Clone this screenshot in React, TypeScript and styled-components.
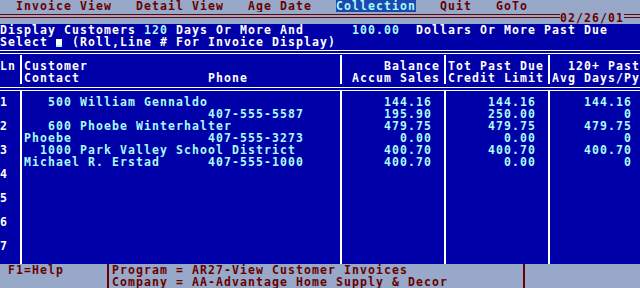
import React from "react";
import styled, { createGlobalStyle } from "styled-components";

const BLUE = "#0000a8";
const GRAY = "#98a8c8";
const RED = "#680000";
const CYAN = "#a8fcfc";
const WHITE = "#ffffff";
const CELL = 8;

const GlobalStyle = createGlobalStyle`
  html, body {
    margin: 0;
    padding: 0;
    background: ${BLUE};
  }
  body {
    font-family: "DejaVu Sans Mono", "Liberation Mono", monospace;
    font-weight: bold;
    font-size: 11.5px;
    letter-spacing: 1.077px;
    line-height: 12px;
  }
  #root {
    width: 640px;
    height: 288px;
  }
`;

const Screen = styled.div`
  width: 640px;
  height: 288px;
  display: flex;
  flex-direction: column;
  overflow: hidden;
  white-space: pre;
`;

const MenuBar = styled.div`
  height: 12px;
  display: flex;
  gap: ${3 * CELL}px;
  padding-left: ${2 * CELL}px;
  background: ${GRAY};
  color: ${RED};
`;

const MenuItem = styled.span<{ $active?: boolean }>`
  height: 12px;
  background: ${(p) => (p.$active ? "#1c48b0" : "transparent")};
  color: ${(p) => (p.$active ? CYAN : RED)};
`;

const DateRow = styled.div`
  height: 12px;
  display: flex;
  align-items: flex-start;
  background: ${GRAY};
  color: ${RED};
`;

const RedRule = styled.div<{ $w?: number }>`
  ${(p) => (p.$w ? `width: ${p.$w}px;` : "flex: 1;")}
  height: 4px;
  margin-top: 2px;
  box-sizing: border-box;
  border-top: 1px solid ${RED};
  border-bottom: 1px solid ${RED};
`;

const Prompt = styled.div`
  background: ${BLUE};
  color: ${WHITE};
`;

const Line = styled.div`
  height: 12px;
  display: flex;
`;

const Hi = styled.span`
  color: ${CYAN};
`;

const CursorCell = styled.span`
  width: ${CELL}px;
  display: flex;
  align-items: flex-end;
  padding-bottom: 1px;
  box-sizing: border-box;
`;

const Cursor = styled.span`
  width: 6px;
  height: 6px;
  background: ${WHITE};
  border-bottom: 2px solid ${CYAN};
`;

const DoubleRule = styled.div<{ $top: number; $bottom: number }>`
  height: 4px;
  margin-top: ${(p) => p.$top}px;
  margin-bottom: ${(p) => p.$bottom}px;
  box-sizing: border-box;
  border-top: 1px solid ${WHITE};
  border-bottom: 1px solid ${WHITE};
`;

const Section = styled.div<{ $h: number }>`
  height: ${(p) => p.$h}px;
  display: flex;
  background: ${BLUE};
`;

const Column = styled.div<{ $w?: number; $first?: boolean; $right?: boolean; $pl?: number; $pr?: number; $color?: string }>`
  ${(p) => (p.$w ? `width: ${p.$w}px;` : "flex: 1;")}
  box-sizing: border-box;
  padding-top: 5px;
  padding-left: ${(p) => p.$pl ?? 0}px;
  padding-right: ${(p) => p.$pr ?? 0}px;
  border-left: ${(p) => (p.$first ? "none" : `2px solid ${WHITE}`)};
  text-align: ${(p) => (p.$right ? "right" : "left")};
  color: ${(p) => p.$color ?? WHITE};
`;

const CellLine = styled.div`
  height: 12px;
`;

const NumField = styled.span`
  display: inline-block;
  width: ${4 * CELL}px;
  margin-left: ${2 * CELL}px;
  margin-right: ${CELL}px;
  text-align: right;
`;

const ContactField = styled.span`
  display: inline-block;
  width: ${23 * CELL}px;
`;

const StatusBar = styled.div`
  height: 24px;
  display: flex;
  background: ${GRAY};
  color: ${RED};
`;

const StatusCell = styled.div<{ $w?: number; $pl: number }>`
  ${(p) => (p.$w ? `width: ${p.$w}px;` : "flex: 1;")}
  padding-left: ${(p) => p.$pl}px;
  box-sizing: border-box;
`;

const Divider = styled.div`
  width: 2px;
  background: ${RED};
`;

type Row = {
  num: string;
  name: string;
  contact: string;
  phone: string;
  balance: string;
  accum: string;
  pastDue: string;
  credit: string;
  past120: string;
  avg: string;
};

const rows: Row[] = [
  { num: "500", name: "William Gennaldo", contact: "", phone: "407-555-5587", balance: "144.16", accum: "195.90", pastDue: "144.16", credit: "250.00", past120: "144.16", avg: "0" },
  { num: "600", name: "Phoebe Winterhalter", contact: "Phoebe", phone: "407-555-3273", balance: "479.75", accum: "0.00", pastDue: "479.75", credit: "0.00", past120: "479.75", avg: "0" },
  { num: "1000", name: "Park Valley School District", contact: "Michael R. Erstad", phone: "407-555-1000", balance: "400.70", accum: "400.70", pastDue: "400.70", credit: "0.00", past120: "400.70", avg: "0" },
];

const SLOTS = 7;
const menu = ["Invoice View", "Detail View", "Age Date", "Collection", "Quit", "GoTo"];

const pair = (a: string, b: string, key: number) => (
  <React.Fragment key={key}>
    <CellLine>{a || " "}</CellLine>
    <CellLine>{b || " "}</CellLine>
  </React.Fragment>
);

const App = (): React.ReactElement => {
  const slots = Array.from({ length: SLOTS }, (_, i) => rows[i]);
  return (
    <>
      <GlobalStyle />
      <Screen>
        <MenuBar>
          {menu.map((m) => (
            <MenuItem key={m} $active={m === "Collection"}>{m}</MenuItem>
          ))}
        </MenuBar>
        <DateRow>
          <RedRule />
          <span>02/26/01</span>
          <RedRule $w={16} />
        </DateRow>

        <Prompt>
          <Line>
            Display Customers <Hi>120</Hi> Days Or More And      <Hi>100.00</Hi>  Dollars Or More Past Due
          </Line>
          <Line>
            {"Select "}
            <CursorCell><Cursor /></CursorCell>
            {" (Roll,Line # For Invoice Display)"}
          </Line>
        </Prompt>

        <DoubleRule $top={2} $bottom={1} />

        <Section $h={29}>
          <Column $w={20} $first>
            <CellLine>Ln</CellLine>
          </Column>
          <Column $w={320} $pl={2}>
            <CellLine>Customer</CellLine>
            <CellLine><ContactField>Contact</ContactField>Phone</CellLine>
          </Column>
          <Column $w={104} $right $pr={4}>
            <CellLine>Balance</CellLine>
            <CellLine>Accum Sales</CellLine>
          </Column>
          <Column $w={104} $right $pl={2} $pr={4}>
            <CellLine>Tot Past Due</CellLine>
            <CellLine>Credit Limit</CellLine>
          </Column>
          <Column $right $pl={2}>
            <CellLine>120+ Past</CellLine>
            <CellLine>Avg Days/Py</CellLine>
          </Column>
        </Section>

        <DoubleRule $top={3} $bottom={0} />

        <Section $h={173}>
          <Column $w={20} $first>
            {slots.map((_, i) => pair(String(i + 1), "", i))}
          </Column>
          <Column $w={320} $pl={2} $color={CYAN}>
            {slots.map((r, i) => (
              <React.Fragment key={i}>
                <CellLine>{r ? <><NumField>{r.num}</NumField>{r.name}</> : " "}</CellLine>
                <CellLine>{r ? <><ContactField>{r.contact}</ContactField>{r.phone}</> : " "}</CellLine>
              </React.Fragment>
            ))}
          </Column>
          <Column $w={104} $right $pr={12} $color={CYAN}>
            {slots.map((r, i) => pair(r?.balance ?? "", r?.accum ?? "", i))}
          </Column>
          <Column $w={104} $right $pr={12} $color={CYAN}>
            {slots.map((r, i) => pair(r?.pastDue ?? "", r?.credit ?? "", i))}
          </Column>
          <Column $right $pr={8} $color={CYAN}>
            {slots.map((r, i) => pair(r?.past120 ?? "", r?.avg ?? "", i))}
          </Column>
        </Section>

        <StatusBar>
          <StatusCell $w={107} $pl={8}>F1=Help</StatusCell>
          <Divider />
          <StatusCell $w={414} $pl={3}>
            <div>Program = AR27-View Customer Invoices</div>
            <div>Company = AA-Advantage Home Supply &amp; Decor</div>
          </StatusCell>
          <Divider />
          <StatusCell $pl={0} />
        </StatusBar>
      </Screen>
    </>
  );
};

export default App;
